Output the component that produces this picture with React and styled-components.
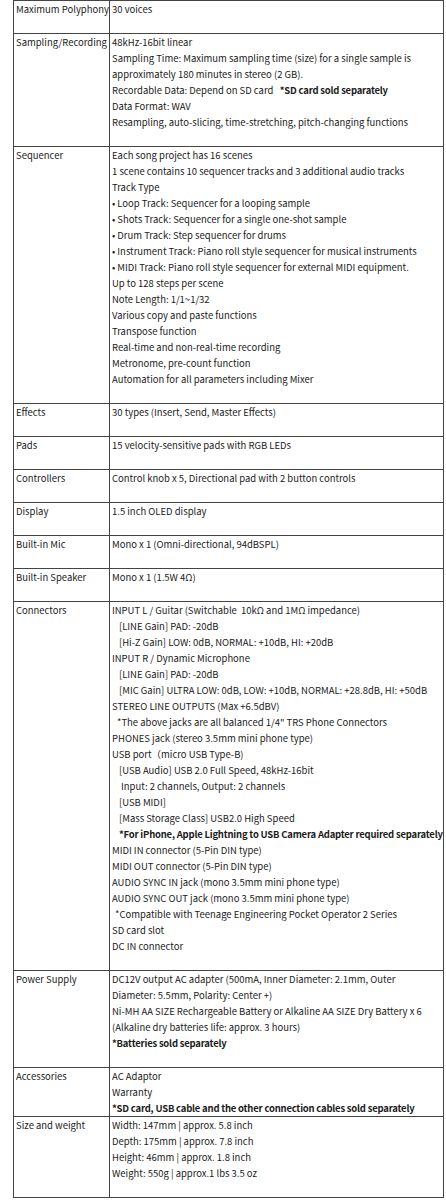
import React from 'react';
import styled, { createGlobalStyle } from 'styled-components';

const GlobalStyle = createGlobalStyle`
  html, body {
    margin: 0;
    padding: 0;
    background: #fff;
  }
  body {
    font-family: "Noto Sans CJK JP", "Noto Sans", sans-serif;
    font-size: 9.47px;
    line-height: 16px;
    color: #1b1b1b;
  }
`;

const Page = styled.div`
  padding: 0 3px 0 13px;
`;

const Table = styled.div`
  width: 431px;
  border: 1px solid #444;
  box-sizing: border-box;
`;

const Row = styled.div`
  display: grid;
  grid-template-columns: 96px 1fr;
  & + & {
    border-top: 1px solid #444;
  }
`;

const Label = styled.div`
  padding: 0 0 0 2px;
  border-right: 1px solid #444;
  white-space: nowrap;
`;

const Value = styled.div`
  padding: 0 0 0 2px;
  padding-bottom: ${p => (p.$tight ? '0' : '16px')};
`;

const Line = styled.div`
  padding-left: ${p => p.$indent || 0}px;
  font-weight: ${p => (p.$bold ? 700 : 400)};
  letter-spacing: ${p => (p.$bold ? '-0.2px' : 'normal')};
  white-space: ${p => (p.$bold ? 'nowrap' : 'pre-wrap')};
`;

const Strong = styled.span`
  font-weight: 700;
  letter-spacing: -0.2px;
`;

const specs = [
  { label: 'Maximum Polyphony', lines: ['30 voices'] },
  {
    label: 'Sampling/Recording',
    lines: [
      '48kHz-16bit linear',
      'Sampling Time: Maximum sampling time (size) for a single sample is',
      'approximately 180 minutes in stereo (2 GB).',
      { text: 'Recordable Data: Depend on SD card\u00a0\u00a0\u00a0', strong: '*SD card sold separately' },
      'Data Format: WAV',
      'Resampling, auto-slicing, time-stretching, pitch-changing functions',
    ],
  },
  {
    label: 'Sequencer',
    lines: [
      'Each song project has 16 scenes',
      '1 scene contains 10 sequencer tracks and 3 additional audio tracks',
      'Track Type',
      '• Loop Track: Sequencer for a looping sample',
      '• Shots Track: Sequencer for a single one-shot sample',
      '• Drum Track: Step sequencer for drums',
      '• Instrument Track: Piano roll style sequencer for musical instruments',
      '• MIDI Track: Piano roll style sequencer for external MIDI equipment.',
      'Up to 128 steps per scene',
      'Note Length: 1/1~1/32',
      'Various copy and paste functions',
      'Transpose function',
      'Real-time and non-real-time recording',
      'Metronome, pre-count function',
      'Automation for all parameters including Mixer',
    ],
  },
  { label: 'Effects', lines: ['30 types (Insert, Send, Master Effects)'] },
  { label: 'Pads', lines: ['15 velocity-sensitive pads with RGB LEDs'] },
  { label: 'Controllers', lines: ['Control knob x 5, Directional pad with 2 button controls'] },
  { label: 'Display', lines: ['1.5 inch OLED display'] },
  { label: 'Built-in Mic', lines: ['Mono x 1 (Omni-directional, 94dBSPL)'] },
  { label: 'Built-in Speaker', lines: ['Mono x 1 (1.5W 4Ω)'] },
  {
    label: 'Connectors',
    lines: [
      'INPUT L / Guitar (Switchable\u00a0 10kΩ and 1MΩ impedance)',
      { text: '[LINE Gain] PAD: -20dB', indent: 7 },
      { text: '[Hi-Z Gain] LOW: 0dB, NORMAL: +10dB, HI: +20dB', indent: 7 },
      'INPUT R / Dynamic Microphone',
      { text: '[LINE Gain] PAD: -20dB', indent: 7 },
      { text: '[MIC Gain] ULTRA LOW: 0dB, LOW: +10dB, NORMAL: +28.8dB, HI: +50dB', indent: 7 },
      'STEREO LINE OUTPUTS (Max +6.5dBV)',
      { text: '*The above jacks are all balanced 1/4" TRS Phone Connectors', indent: 5 },
      'PHONES jack (stereo 3.5mm mini phone type)',
      'USB port（micro USB Type-B)',
      { text: '[USB Audio] USB 2.0 Full Speed, 48kHz-16bit', indent: 7 },
      { text: 'Input: 2 channels, Output: 2 channels', indent: 9 },
      { text: '[USB MIDI]', indent: 7 },
      { text: '[Mass Storage Class] USB2.0 High Speed', indent: 7 },
      { text: '*For iPhone, Apple Lightning to USB Camera Adapter required separately', indent: 7, bold: true },
      'MIDI IN connector (5-Pin DIN type)',
      'MIDI OUT connector (5-Pin DIN type)',
      'AUDIO SYNC IN jack (mono 3.5mm mini phone type)',
      'AUDIO SYNC OUT jack (mono 3.5mm mini phone type)',
      { text: '*Compatible with Teenage Engineering Pocket Operator 2 Series', indent: 3 },
      'SD card slot',
      'DC IN connector',
    ],
  },
  {
    label: 'Power Supply',
    lines: [
      'DC12V output AC adapter (500mA, Inner Diameter: 2.1mm, Outer',
      'Diameter: 5.5mm, Polarity: Center +)',
      'Ni-MH AA SIZE Rechargeable Battery or Alkaline AA SIZE Dry Battery x 6',
      '(Alkaline dry batteries life: approx. 3 hours)',
      { text: '*Batteries sold separately', bold: true },
    ],
  },
  {
    label: 'Accessories',
    tight: true,
    lines: [
      'AC Adaptor',
      'Warranty',
      { text: '*SD card, USB cable and the other connection cables sold separately', bold: true },
    ],
  },
  {
    label: 'Size and weight',
    lines: [
      'Width: 147mm | approx. 5.8 inch',
      'Depth: 175mm | approx. 7.8 inch',
      'Height: 46mm | approx. 1.8 inch',
      'Weight: 550g | approx.1 lbs 3.5 oz',
    ],
  },
];

function SpecLine({ line }) {
  if (typeof line === 'string') return <Line>{line}</Line>;
  return (
    <Line $indent={line.indent} $bold={line.bold}>
      {line.text}
      {line.strong && <Strong>{line.strong}</Strong>}
    </Line>
  );
}

export default function App() {
  return (
    <Page>
      <GlobalStyle />
      <Table>
        {specs.map(spec => (
          <Row key={spec.label}>
            <Label>{spec.label}</Label>
            <Value $tight={spec.tight}>
              {spec.lines.map((line, i) => (
                <SpecLine key={i} line={line} />
              ))}
            </Value>
          </Row>
        ))}
      </Table>
    </Page>
  );
}
